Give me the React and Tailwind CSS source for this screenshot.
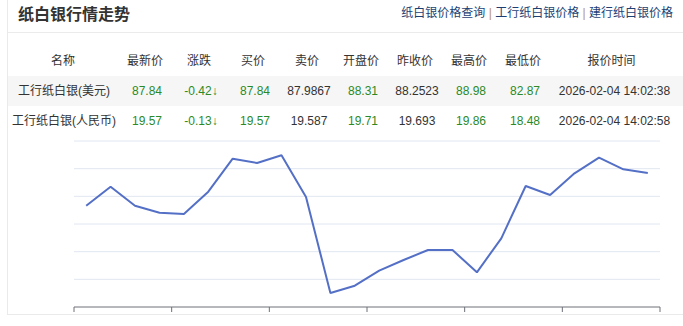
const columns = [
  { title: "名称", width: "w-[110px]" },
  { title: "最新价", width: "w-[54px]" },
  { title: "涨跌", width: "w-[54px]" },
  { title: "买价", width: "w-[54px]" },
  { title: "卖价", width: "w-[54px]" },
  { title: "开盘价", width: "w-[54px]" },
  { title: "昨收价", width: "w-[54px]" },
  { title: "最高价", width: "w-[54px]" },
  { title: "最低价", width: "w-[54px]" },
  { title: "报价时间", width: "w-[123px]" },
];

const rows = [
  {
    name: "工行纸白银(美元)",
    cells: ["87.84", "-0.42↓", "87.84", "87.9867", "88.31", "88.2523", "88.98", "82.87"],
    time: "2026-02-04 14:02:38",
    shaded: true,
  },
  {
    name: "工行纸白银(人民币)",
    cells: ["19.57", "-0.13↓", "19.57", "19.587", "19.71", "19.693", "19.86", "18.48"],
    time: "2026-02-04 14:02:58",
    shaded: false,
  },
];

// gray = no change colour, the rest are green
const grayCols = [3, 5];

// y of each point in the 178px high chart
const series = [
  69.7, 50.7, 69.7, 76.7, 78, 55.7, 22.7, 27, 19.3, 61, 157, 149.7,
  134.7, 124, 114, 114, 136.3, 102.3, 50, 59, 37.3, 21.7, 33.3, 37,
];

const PriceChart = () => {
  const left = 66;
  const right = 652;
  const step = (right - left) / series.length;
  const grid = [5, 32.67, 60.33, 88, 115.67, 143.33];
  const points = series
    .map((y, i) => `${(left + step / 2 + i * step).toFixed(1)},${y}`)
    .join(" ");

  return (
    <svg width="676" height="178" className="block">
      {grid.map((y) => (
        <line key={y} x1={left} x2={right} y1={y} y2={y} stroke="#e0e6f1" strokeWidth="1" />
      ))}
      <line x1={left} x2={right} y1="171" y2="171" stroke="#6e7079" strokeWidth="1" />
      {[0, 1, 2, 3, 4, 5, 6].map((k) => {
        const x = left + k * step * 4;
        return <line key={k} x1={x} x2={x} y1="171" y2="176" stroke="#6e7079" strokeWidth="1" />;
      })}
      <polyline
        points={points}
        fill="none"
        stroke="#5470c6"
        strokeWidth="2"
        strokeLinejoin="bevel"
      />
    </svg>
  );
};

export default function App() {
  return (
    <div
      className="w-[683px] h-[326px] bg-white overflow-hidden"
      style={{ fontFamily: '"Liberation Sans", "Noto Sans CJK SC", sans-serif' }}
    >
      <div className="ml-[7px] border-l border-b border-[#eaeaea]">
        <div className="h-[33px] flex items-start justify-between border-b border-[#ebebeb] pr-[10px]">
          <div className="pl-[10px] pt-[5px] text-[16px] leading-[20px] font-bold text-[#333]">
            纸白银行情走势
          </div>
          <div className="pt-[5px] text-[12px] leading-[16px] text-[#1d3f73]">
            <span>纸白银价格查询</span>
            <span className="text-[#b8956a]"> | </span>
            <span>工行纸白银价格</span>
            <span className="text-[#b8956a]"> | </span>
            <span>建行纸白银价格</span>
          </div>
        </div>

        <div className="pt-[13px] text-[12px] text-[#333]">
          <div className="flex h-[30px] items-center">
            {columns.map((col) => (
              <div key={col.title} className={`${col.width} text-center`}>
                {col.title}
              </div>
            ))}
          </div>
          {rows.map((row) => (
            <div
              key={row.name}
              className={`flex h-[30px] items-center ${row.shaded ? "bg-[#f6f6f6]" : ""}`}
            >
              <div className="w-[110px] pl-[2px] text-center whitespace-nowrap">{row.name}</div>
              {row.cells.map((value, i) => (
                <div
                  key={i}
                  className={`w-[54px] pl-[4px] text-center whitespace-nowrap ${
                    grayCols.includes(i) ? "text-[#333]" : "text-[#2b8a26]"
                  }`}
                >
                  {value}
                </div>
              ))}
              <div className="w-[123px] pl-[6px] text-center whitespace-nowrap">{row.time}</div>
            </div>
          ))}
        </div>

        <PriceChart />
      </div>
    </div>
  );
}
